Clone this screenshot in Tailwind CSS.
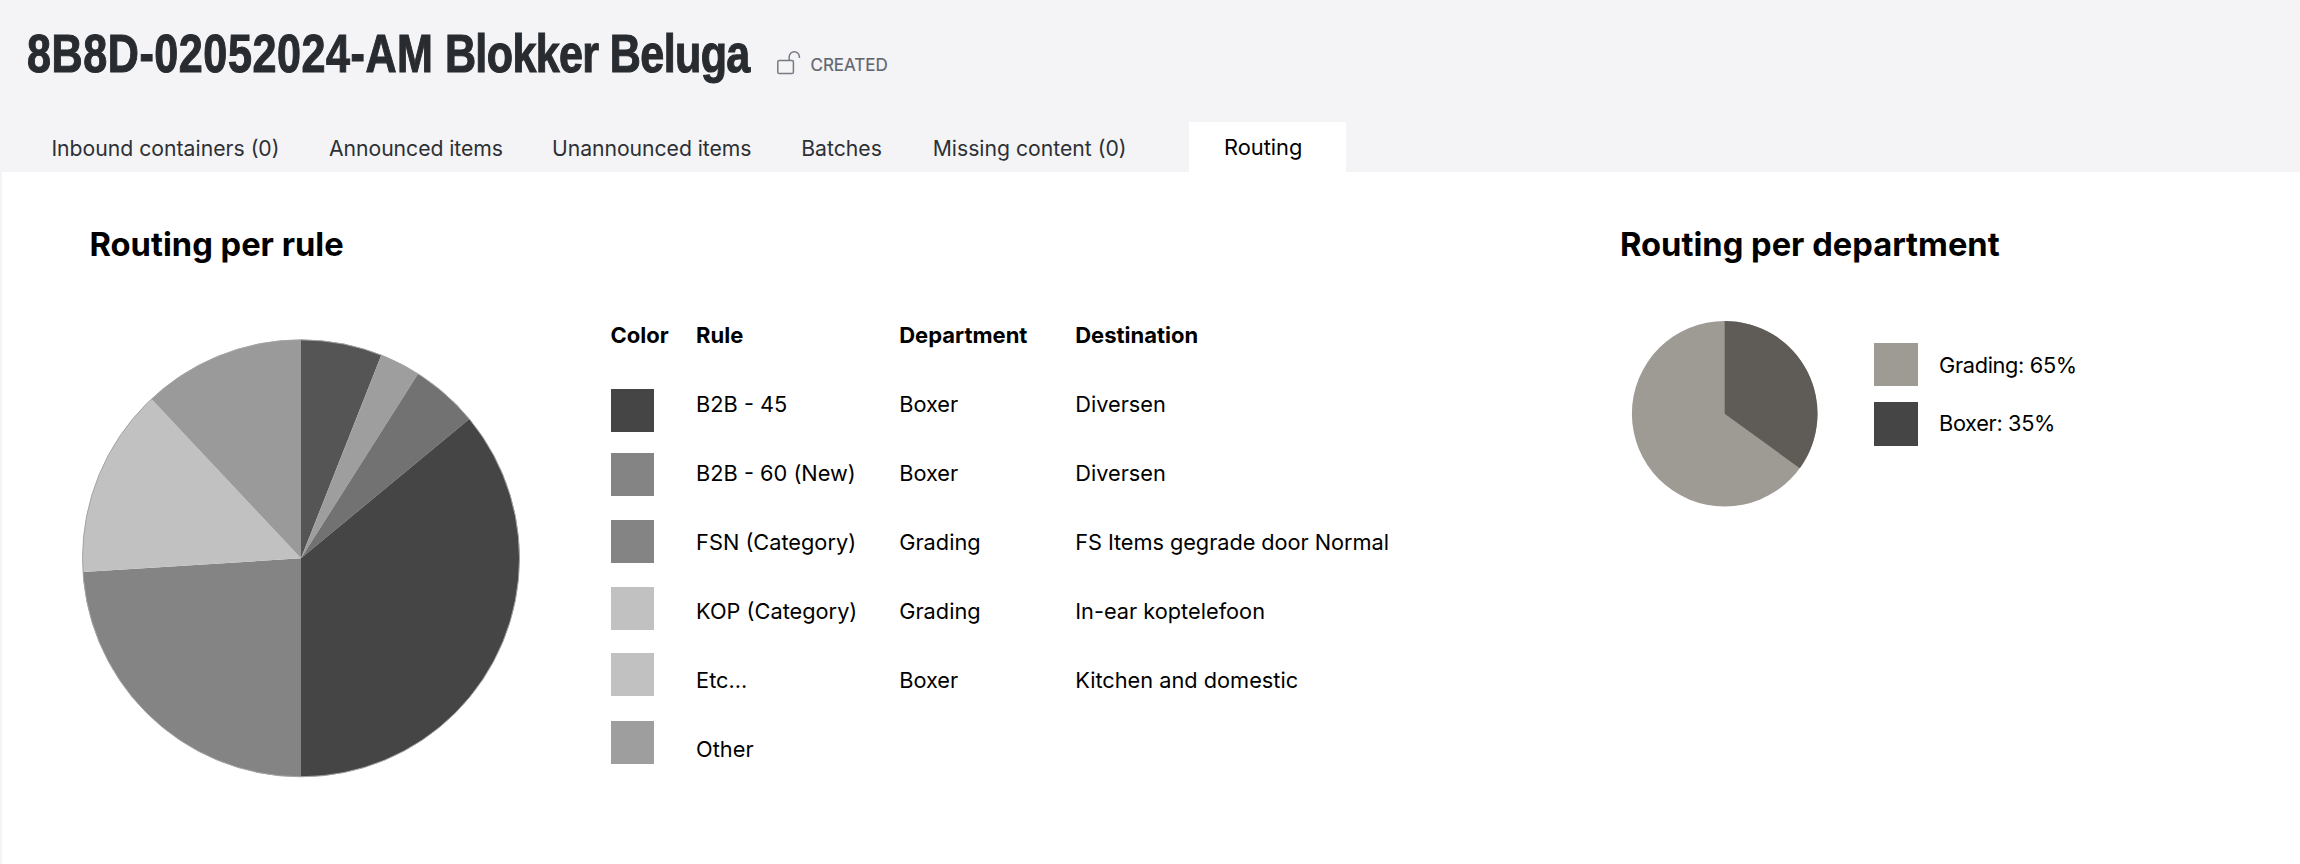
<!DOCTYPE html>
<html lang="en">
<head>
<meta charset="utf-8">
<title>8B8D-02052024-AM Blokker Beluga</title>
<script src="https://cdn.jsdelivr.net/npm/@tailwindcss/browser@4"></script>
</head>
<body class="flex h-screen flex-col overflow-hidden bg-[#f4f4f6] font-[Inter,sans-serif] text-[21.75px] text-black">
  <header class="h-[172px] shrink-0">
    <div class="flex h-[122px] items-start pl-[26px]">
      <div class="mt-[21px] w-[750px] pl-[0.7px]">
        <h1 class="w-max origin-left scale-x-[0.798] font-['Liberation_Sans',sans-serif] text-[54px] leading-[64px] font-bold whitespace-nowrap text-[#282b2f] [-webkit-text-stroke:1.1px_#282b2f]"><span class="tracking-[0.7px]">8B8D-02052024-AM</span><span class="tracking-[-0.8px]"> Blokker Beluga</span></h1>
      </div>
      <svg class="mt-[50px] size-[26px]" viewBox="0 0 26 26" fill="none" stroke="#767a84" stroke-width="1.5">
        <rect x="1.8" y="10.4" width="15.6" height="13.2" rx="1.4"/>
        <path d="M13.2 10.4V6.9a5.1 5.1 0 0 1 10.2 0v1"/>
      </svg>
      <span class="mt-[53px] ml-[8.5px] text-[17px] leading-[24px] text-[#62666f] [-webkit-text-stroke:0.2px_#62666f]">CREATED</span>
    </div>
    <nav class="flex h-[50px] items-center pl-[51.4px] whitespace-nowrap text-[#2d3035] text-[21.2px]">
      <a class="w-[277.6px] pt-[4px]">Inbound containers (0)</a>
      <a class="w-[223px] pt-[4px] tracking-[-0.05px]">Announced items</a>
      <a class="w-[249.2px] pt-[4px] tracking-[-0.05px]">Unannounced items</a>
      <a class="w-[131.5px] pt-[4px]">Batches</a>
      <a class="w-[256.3px] pt-[4px]">Missing content (0)</a>
      <a class="flex h-full w-[157px] items-center bg-white pl-[35px] text-[21.8px] text-black">Routing</a>
    </nav>
  </header>

  <main class="ml-[2px] flex grow items-start bg-white pt-[52px] whitespace-nowrap">
    <section class="w-[1618px] shrink-0 pl-[80px]">
      <h2 class="ml-[7.5px] h-[40px] text-[32.7px] leading-[40px] font-bold">Routing per rule</h2>
      <div class="flex items-start">
        <svg class="mt-[74px] size-[440px] shrink-0" viewBox="-219 -220.3 440 440">
          <path fill="#555555" d="M0 0V-218.5A218.5 218.5 0 0 1 80.4 -203.2Z"/>
          <path fill="#9e9e9e" d="M0 0L80.4 -203.2A218.5 218.5 0 0 1 117.1 -184.5Z"/>
          <path fill="#727272" d="M0 0L117.1 -184.5A218.5 218.5 0 0 1 168.4 -139.3Z"/>
          <path fill="#454545" d="M0 0L168.4 -139.3A218.5 218.5 0 0 1 0 218.5Z"/>
          <path fill="#848484" d="M0 0V218.5A218.5 218.5 0 0 1 -218.1 13.7Z"/>
          <path fill="#c1c1c1" d="M0 0L-218.1 13.7A218.5 218.5 0 0 1 -149.6 -159.3Z"/>
          <path fill="#9a9a9a" d="M0 0L-149.6 -159.3A218.5 218.5 0 0 1 0 -218.5Z"/>
          <circle r="218.5" fill="none" stroke="#a4a4a4" stroke-width="1"/>
        </svg>

        <div class="mt-[36.5px] ml-[88.5px] flex">
          <div class="flex w-[85.6px] flex-col">
            <div class="flex h-[69px] items-center text-[22px] font-bold">Color</div>
            <div class="mt-[19.5px] ml-[0.5px] size-[43px] bg-[#454545]"></div>
            <div class="mt-[20.5px] ml-[0.5px] size-[43px] bg-[#848484]"></div>
            <div class="mt-[24.5px] ml-[0.5px] size-[43px] bg-[#848484]"></div>
            <div class="mt-[23.5px] ml-[0.5px] size-[43px] bg-[#c1c1c1]"></div>
            <div class="mt-[23.5px] ml-[0.5px] size-[43px] bg-[#c1c1c1]"></div>
            <div class="mt-[24.5px] ml-[0.5px] size-[43px] bg-[#9e9e9e]"></div>
          </div>
          <div class="grid auto-rows-[69px] grid-cols-[203.1px_176px_330px] items-center">
            <div class="text-[22px] font-bold">Rule</div><div class="text-[22px] font-bold">Department</div><div class="text-[22px] font-bold">Destination</div>
            <div>B2B - 45</div><div>Boxer</div><div>Diversen</div>
            <div>B2B - 60 (New)</div><div>Boxer</div><div>Diversen</div>
            <div>FSN (Category)</div><div>Grading</div><div class="tracking-[-0.06px]">FS Items gegrade door Normal</div>
            <div>KOP (Category)</div><div>Grading</div><div>In-ear koptelefoon</div>
            <div>Etc...</div><div>Boxer</div><div>Kitchen and domestic</div>
            <div>Other</div><div></div><div></div>
          </div>
        </div>
      </div>
    </section>

    <section>
      <h2 class="h-[40px] text-[32.7px] leading-[40px] font-bold">Routing per department</h2>
      <div class="flex items-start pl-[10px]">
        <svg class="mt-[56px] size-[188px] shrink-0" viewBox="-94.7 -93.7 188 188">
          <circle r="92.8" fill="#9e9a94"/>
          <path fill="#5f5b57" d="M0 0V-92.8A92.8 92.8 0 0 1 75.1 54.5Z"/>
        </svg>
        <div class="mt-[79px] ml-[56px] flex flex-col gap-[16px] tracking-[-0.33px]">
          <div class="flex h-[43px] items-center gap-[21.5px]"><div class="h-[43px] w-[43.5px] bg-[#9e9a94]"></div><span class="pt-[2px]">Grading: 65%</span></div>
          <div class="flex h-[43.5px] items-center gap-[21.5px]"><div class="size-[43.5px] bg-[#454545]"></div><span class="mb-[1px]">Boxer: 35%</span></div>
        </div>
      </div>
    </section>
  </main>
</body>
</html>
